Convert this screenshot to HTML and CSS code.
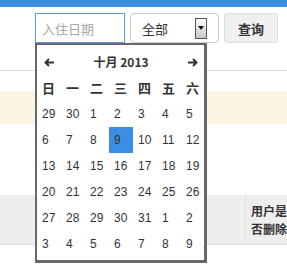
FILE: index.html
```html
<!DOCTYPE html>
<html lang="zh">
<head>
<meta charset="UTF-8" />
<meta name="viewport" content="width=device-width, initial-scale=1" />
<title>入住查询</title>
<link rel="stylesheet" href="styles.css">
</head>
<body>
  <div class="topbar"></div>

  <form class="toolbar">
    <div class="date-field">
      <input class="date-input" type="text" placeholder="入住日期">

      <div class="datepicker">
        <table class="cal">
          <colgroup>
            <col><col><col><col><col><col><col>
          </colgroup>
          <thead>
            <tr class="cal-nav">
              <th class="cal-prev">
                <svg width="10" height="9" viewBox="0 0 10 9"><path d="M5 1 L1.5 4.5 L5 8 M1.5 4.5 H10" fill="none" stroke="#333" stroke-width="2"/></svg>
              </th>
              <th class="cal-title" colspan="5">十月 2013</th>
              <th class="cal-next">
                <svg width="10" height="9" viewBox="0 0 10 9"><path d="M5 1 L8.5 4.5 L5 8 M8.5 4.5 H0" fill="none" stroke="#333" stroke-width="2"/></svg>
              </th>
            </tr>
            <tr class="cal-week">
              <th>日</th><th>一</th><th>二</th><th>三</th><th>四</th><th>五</th><th>六</th>
            </tr>
          </thead>
          <tbody>
            <tr><td>29</td><td>30</td><td>1</td><td>2</td><td>3</td><td>4</td><td>5</td></tr>
            <tr><td>6</td><td>7</td><td>8</td><td class="active">9</td><td>10</td><td>11</td><td>12</td></tr>
            <tr><td>13</td><td>14</td><td>15</td><td>16</td><td>17</td><td>18</td><td>19</td></tr>
            <tr><td>20</td><td>21</td><td>22</td><td>23</td><td>24</td><td>25</td><td>26</td></tr>
            <tr><td>27</td><td>28</td><td>29</td><td>30</td><td>31</td><td>1</td><td>2</td></tr>
            <tr><td>3</td><td>4</td><td>5</td><td>6</td><td>7</td><td>8</td><td>9</td></tr>
          </tbody>
        </table>
      </div>
    </div>

    <div class="select">
      <span>全部</span>
      <span class="select-arrow"></span>
    </div>

    <button class="btn-query" type="button">查询</button>
  </form>

  <div class="content">
    <div class="notice"></div>

    <table class="list">
      <thead>
        <tr>
          <th class="col-main"></th>
          <th class="col-deleted">用户是否删除</th>
          <th class="col-rest"></th>
        </tr>
      </thead>
    </table>
  </div>
</body>
</html>
```

FILE: styles.css
```css
/* Base reset */
* {
  box-sizing: border-box;
}
html,
body {
  height: 265px;
}
body {
  margin: 0;
  font-family: 'Liberation Sans', 'Noto Sans CJK SC', sans-serif;
  font-size: 12px;
  color: #333;
  background: #fff;
  overflow: hidden;
}
.topbar {
  height: 7px;
  background: #3b8fe0;
}

/* search bar */
.toolbar {
  display: flex;
  gap: 5px;
  margin: 0;
  padding: 6px 0 27px 35px;
  border-bottom: 1px solid #ddd;
}
.date-field {
  position: relative;
}
.date-input {
  display: block;
  width: 90px;
  height: 30px;
  margin: 0;
  padding: 0 6px;
  border: 1px solid #5d9ce8;
  font-family: 'Noto Sans CJK SC', sans-serif;
  font-size: 13px;
  color: #333;
  outline: none;
}
.date-input::placeholder {
  color: #a8a8a8;
}
.select {
  display: flex;
  align-items: center;
  justify-content: space-between;
  width: 89px;
  height: 30px;
  padding: 0 11px 0 11px;
  border: 1px solid #ccc;
  border-radius: 4px;
  font-family: 'Noto Sans CJK SC', sans-serif;
  font-size: 13px;
}
.select-arrow {
  display: flex;
  align-items: center;
  justify-content: center;
  width: 12px;
  height: 21px;
  border: 1px solid #555;
  background: linear-gradient(#fdfdfd, #c8c8c8);
}
.select-arrow::after {
  content: '';
  border-left: 3px solid transparent;
  border-right: 3px solid transparent;
  border-top: 4px solid #111;
}
.btn-query {
  width: 54px;
  height: 30px;
  margin: 0;
  padding: 0;
  border: 1px solid #ddd;
  border-radius: 3px;
  background: #f0f0f0;
  font-family: 'Noto Sans CJK SC', sans-serif;
  font-size: 13px;
  font-weight: 700;
  color: #333;
}

/* date picker popup */
.datepicker {
  position: absolute;
  top: 100%;
  left: 0;
  z-index: 2;
  width: 172px;
  height: 220px;
  padding: 4px 0;
  overflow: hidden;
  background: #fff;
  border: 2px solid #686868;
  border-right-width: 3px;
  border-bottom-width: 3px;
}
.cal {
  width: 168px;
  border-collapse: collapse;
  table-layout: fixed;
}
.cal col {
  width: 24px;
}
.cal tr {
  height: 26px;
}
.cal th,
.cal td {
  height: 26px;
  padding: 0 0 0 5px;
  line-height: 26px;
  text-align: left;
  vertical-align: middle;
  white-space: nowrap;
}
.cal th {
  font-family: 'Noto Sans CJK SC', sans-serif;
  font-size: 13px;
  font-weight: 700;
}
.cal-nav th {
  padding-left: 7px;
}
.cal-nav svg {
  display: block;
}
.cal-nav .cal-title {
  padding: 0;
  text-align: center;
  font-size: 12px;
}
.cal td {
  font-size: 12px;
}
.cal td.active {
  background: #3a8ee3;
}

/* result list */
.content {
  overflow: hidden;
}
.notice {
  height: 33px;
  margin-top: 20px;
  background: #fcf5e4;
}
.list {
  margin-top: 71px;
  border-spacing: 0;
  table-layout: fixed;
  width: 400px;
}
.list th {
  height: 50px;
  padding: 0;
  background: #eee;
  border-bottom: 1px solid #ddd;
  font-family: 'Noto Sans CJK SC', sans-serif;
  font-size: 12px;
  font-weight: 700;
  line-height: 18px;
  text-align: left;
}
.list .col-main {
  width: 246px;
  border-right: 1px solid #ddd;
}
.list .col-deleted {
  width: 46px;
  padding: 0 4px 0 5px;
}
```
